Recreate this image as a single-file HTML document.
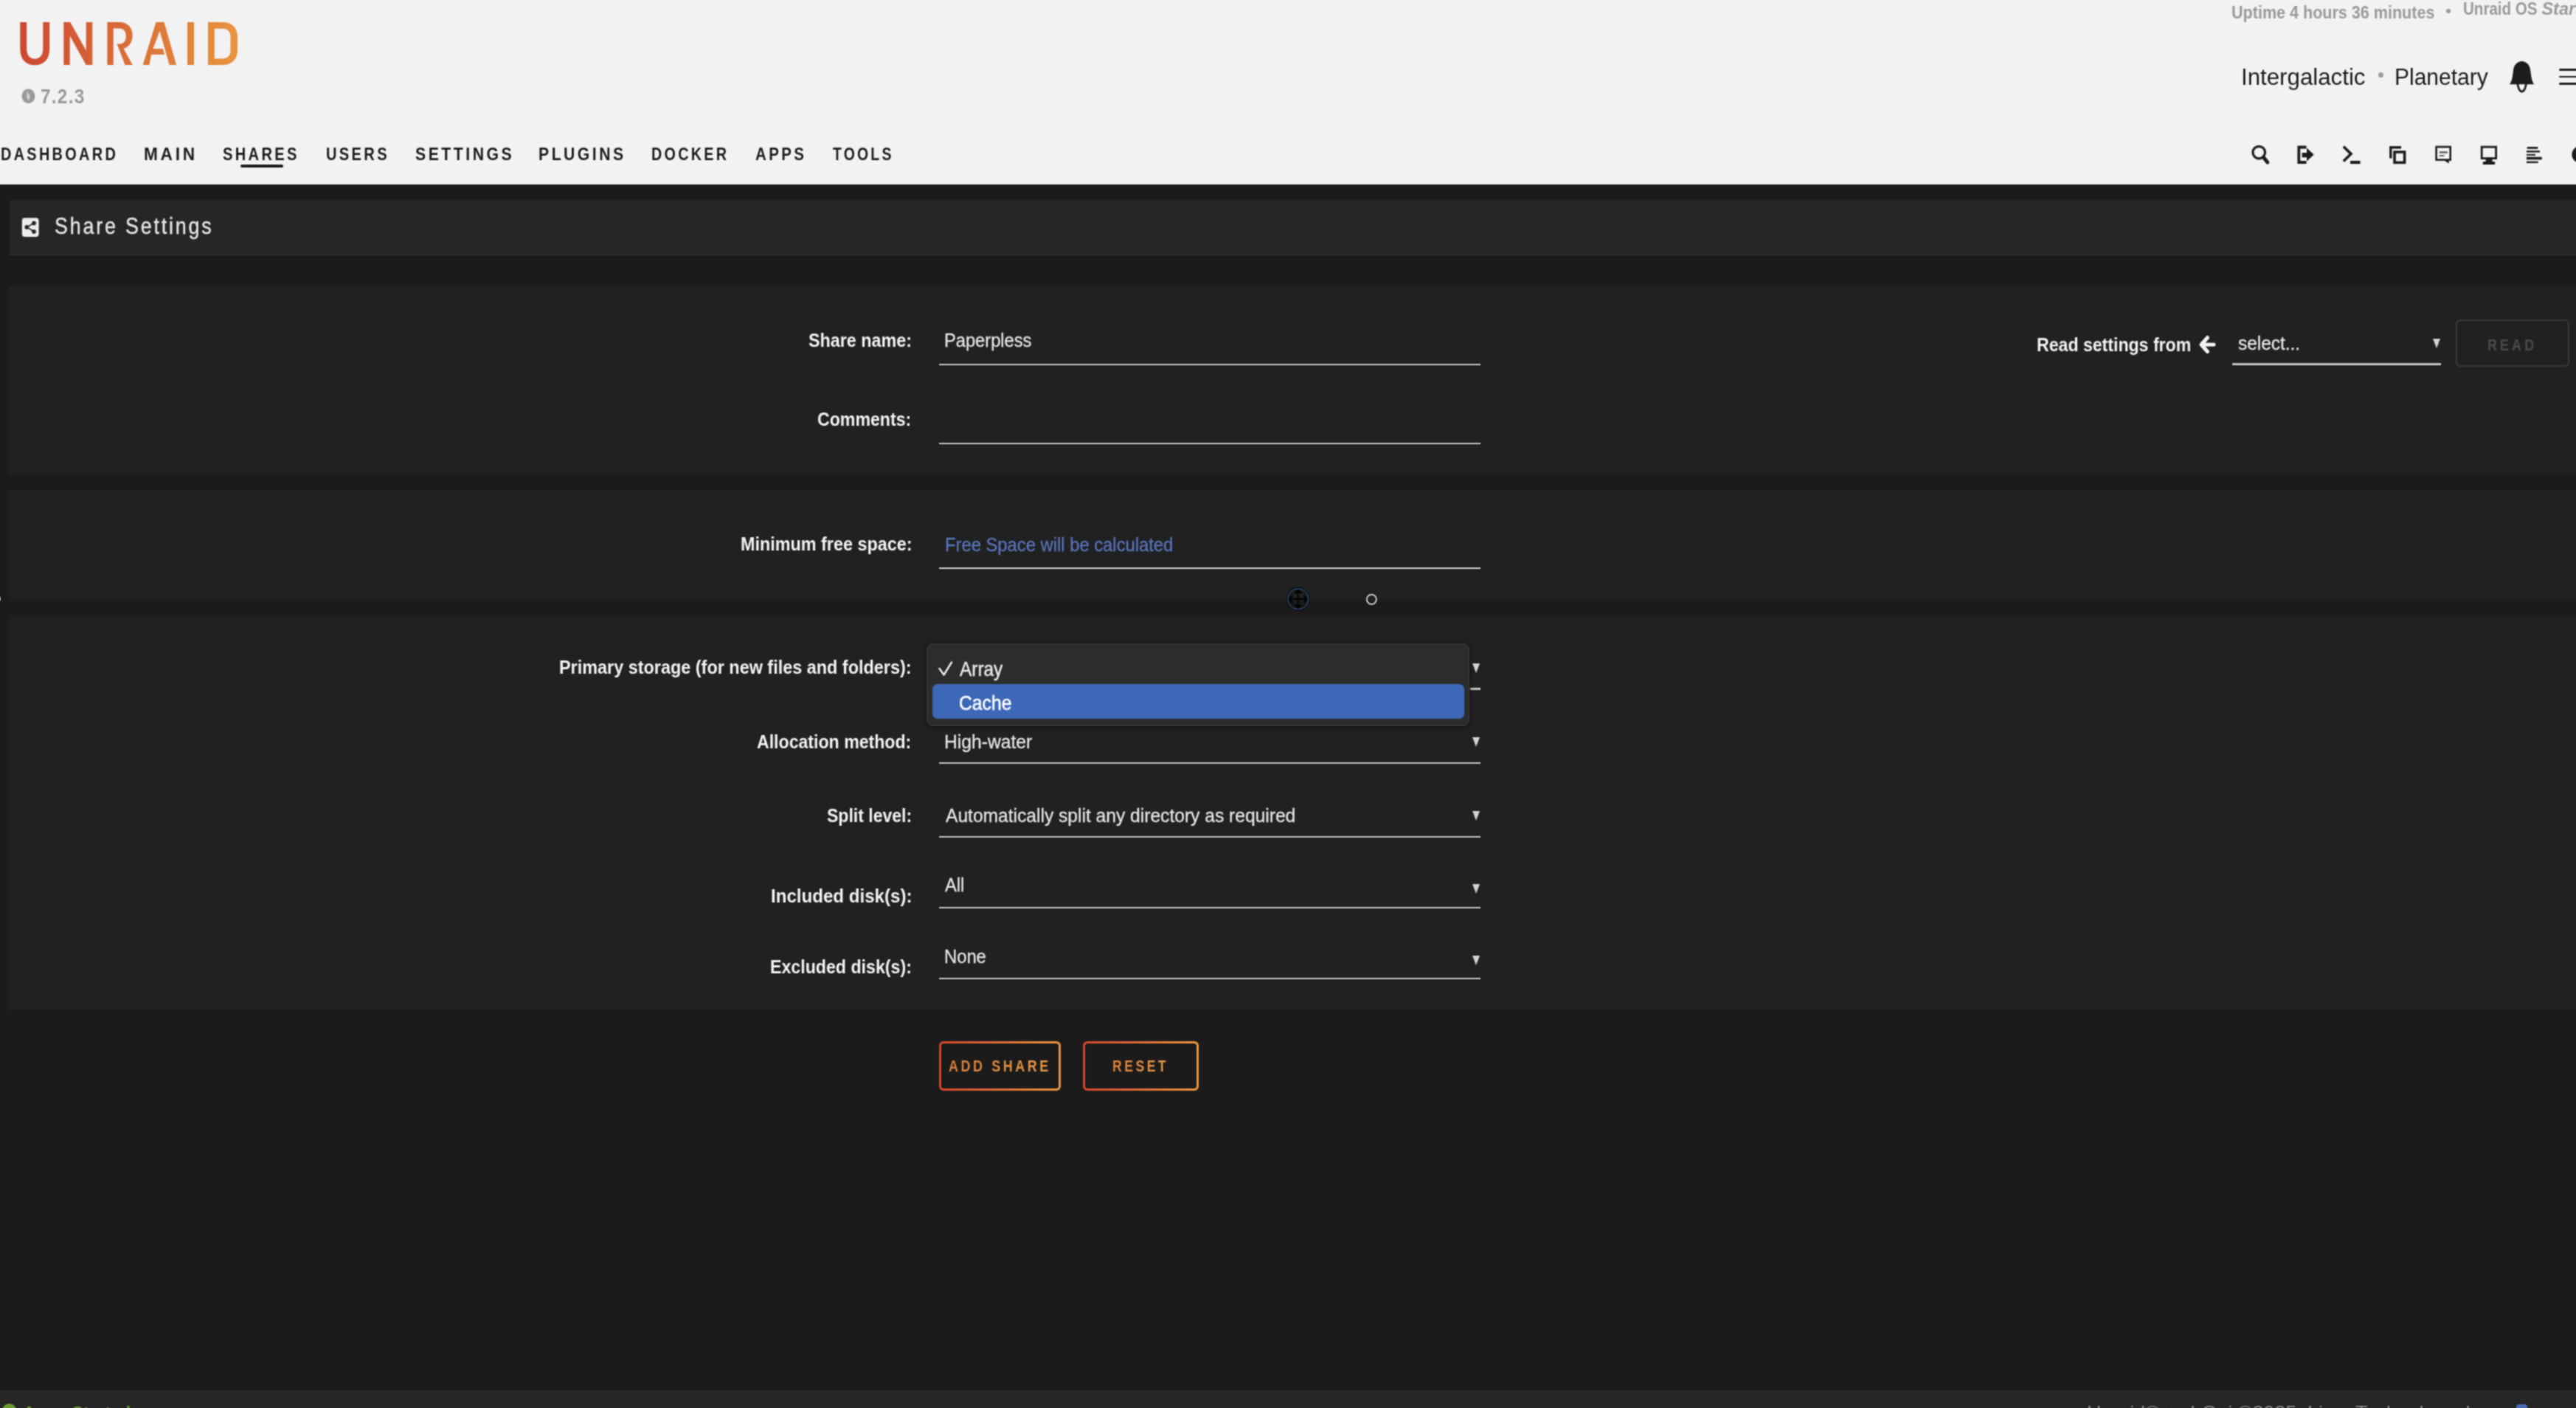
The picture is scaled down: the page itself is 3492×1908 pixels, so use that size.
<!DOCTYPE html>
<html><head><meta charset="utf-8"><title>Share Settings</title>
<style>
html,body{margin:0;padding:0;width:3492px;height:1908px;overflow:hidden;background:#1c1b1b;position:relative;font-family:"Liberation Sans",sans-serif}
.a{position:absolute}
.tx{position:absolute;line-height:1;white-space:pre;transform-origin:0 0;z-index:5}
.ul{position:absolute;height:2.5px;background:#c6c6c6;z-index:2}
.arr{position:absolute;width:0;height:0;border-left:5px solid transparent;border-right:5px solid transparent;border-top:13px solid #d2d2d2;z-index:2}
svg{position:absolute;overflow:visible}
</style></head><body><svg width="0" height="0" style="position:absolute"><filter id="bl" x="0" y="0" width="100%" height="100%" color-interpolation-filters="sRGB"><feConvolveMatrix order="5" kernelMatrix="0.00048 0.00501 0.01095 0.00501 0.00048 0.00501 0.05222 0.11405 0.05222 0.00501 0.01095 0.11405 0.24912 0.11405 0.01095 0.00501 0.05222 0.11405 0.05222 0.00501 0.00048 0.00501 0.01095 0.00501 0.00048" edgeMode="duplicate"/></filter></svg><div style="position:absolute;left:0;top:0;width:3492px;height:1908px;overflow:hidden"><div id="w" style="position:absolute;left:-6px;top:-6px;width:3504px;height:1920px;background:#1c1b1b;filter:url(#bl)"><div style="position:absolute;left:6px;top:6px;width:3492px;height:1908px">
<!-- header -->
<div class="a" style="left:-6px;top:-6px;width:3504px;height:256px;background:#f2f2f2"></div>
<svg style="left:0;top:0" width="340" height="100" viewBox="0 0 340 100">
<defs><linearGradient id="lg" x1="26" y1="0" x2="322" y2="0" gradientUnits="userSpaceOnUse"><stop offset="0" stop-color="#cc4731"/><stop offset="1" stop-color="#e8953f"/></linearGradient></defs>
<g fill="url(#lg)" fill-rule="evenodd">
<path d="M27.3 30H36.2V66C36.2 75 40.5 79.7 47.2 79.7C54 79.7 58.3 75 58.3 66V30H67.2V66C67.2 80.5 59.5 88.3 47.2 88.3C35 88.3 27.3 80.5 27.3 66Z"/>
<path d="M86.3 88V30H95.2L116.7 68.5V30H125.3V88H116.6L94.7 48.5V88Z"/>
<path d="M145.4 30H162C173 30 179.7 37.5 179.7 48C179.7 57 174.5 64 167.5 66L179.7 88H169.5L158.6 59.6H162C167.5 59.6 170.8 55.5 170.8 49C170.8 42.5 167.2 38.5 162 38.5H153.7V88H145.4Z"/>
<path d="M193.6 88L211.5 30H222.5L239.1 88H229.6L216.5 42L207.5 66H221L223 74H205L202.4 88Z"/>
<path d="M254 30H263V88H254Z"/>
<path d="M282 30H301C314.5 30 322 37.5 322 50V68C322 80.5 314.5 88 301 88H282ZM290.8 38.7V79.5H301C308.5 79.5 312.5 75.5 312.5 68V50C312.5 42.5 308.5 38.7 301 38.7Z"/>
</g>
</svg>
<svg style="left:0;top:0" width="60" height="150" viewBox="0 0 60 150">
<ellipse cx="38.5" cy="130.3" rx="9" ry="10" fill="#9a9a9a"/>
<path d="M37 123L41 131L38.5 137L36 131Z" fill="#cfcfcf"/>
</svg>
<div class="a" style="left:326px;top:222.6px;width:58px;height:4px;border-radius:2px;background:#1c1c1c"></div>
<div class="a" style="left:3316px;top:11.5px;width:6px;height:6px;border-radius:50%;background:#9a9a9a"></div>
<div class="a" style="left:3223.8px;top:98.3px;width:7px;height:7px;border-radius:50%;background:#9c9c9c"></div>
<!-- bell -->
<svg style="left:3400px;top:80px" width="40" height="48" viewBox="0 0 40 48">
<path d="M18.6 2.9C12.5 2.9 8.3 8 7.3 13.5L5.8 24C5.3 28.5 3.8 31.5 2 34.3H35.2C33.4 31.5 31.9 28.5 31.4 24L29.9 13.5C28.9 8 24.7 2.9 18.6 2.9Z" fill="#1c1c1c"/>
<path d="M12.8 34C14 40.5 16 44 18.6 44C21.2 44 23.2 40.5 24.4 34" fill="none" stroke="#1c1c1c" stroke-width="2.8"/>
</svg>
<div class="a" style="left:3469.4px;top:93.3px;width:30px;height:2.9px;border-radius:1.5px;background:#1c1c1c"></div>
<div class="a" style="left:3469.4px;top:102.5px;width:30px;height:2.9px;border-radius:1.5px;background:#1c1c1c"></div>
<div class="a" style="left:3469.4px;top:111.8px;width:30px;height:2.9px;border-radius:1.5px;background:#1c1c1c"></div>
<!-- icons row -->
<svg style="left:3040px;top:190px" width="460" height="40" viewBox="3040 190 460 40">
<g fill="none" stroke="#1c1c1c">
<circle cx="3062.2" cy="206.6" r="8.3" stroke-width="3.2"/>
<path d="M3068.3 213L3073.8 220" stroke-width="5" stroke-linecap="round"/>
<path d="M3126.5 199.5H3116.3V220H3126.5" stroke-width="3.8"/>
<path d="M3186.5 197.5L3187.5 208.6L3176.2 219" stroke-width="0"/>
<path d="M3176.8 198.5L3187 208.6L3176.8 218.5" stroke-width="3.6"/>
<path d="M3186 220H3199.5" stroke-width="4.2"/>
<path d="M3240.8 214.5V199.8H3255" stroke-width="3.4"/>
<rect x="3246" y="206" width="13.6" height="14.3" stroke-width="3.6"/>
<rect x="3302.6" y="199" width="19.1" height="17.6" stroke-width="2.6"/>
<rect x="3364.2" y="199.1" width="19.4" height="15.5" stroke-width="2.8"/>
</g>
<g fill="#1c1c1c">
<path d="M3120.6 206.9H3127V200.6L3136.7 209.6L3127 218.6V213.2H3120.6Z"/>
<path d="M3313.5 217.5L3319.5 221.5L3320 217Z"/>
<rect x="3306.9" y="205.3" width="10.9" height="2.3" fill="#555"/>
<rect x="3306.9" y="210" width="6.6" height="2" fill="#666"/>
<rect x="3369.6" y="213.5" width="9" height="6.3"/>
<rect x="3365.7" y="219" width="16.5" height="3.9" rx="1"/>
<rect x="3425.7" y="199" width="14.5" height="2.8"/>
<rect x="3424.9" y="204.1" width="18.1" height="2.4"/>
<rect x="3424.9" y="208.8" width="12.1" height="2"/>
<rect x="3424.9" y="212.7" width="20.8" height="3.6"/>
<rect x="3424.9" y="218.6" width="15.7" height="2.4"/>
<circle cx="3498" cy="209.4" r="11.6"/>
</g>
</svg>

<!-- title bar -->
<div class="a" style="left:13px;top:270.5px;width:3490px;height:73px;background:#262626;border-bottom:2px solid #2e2c2c;border-left:1.5px solid #2a2a2a"></div>
<svg style="left:29px;top:295px" width="24" height="26" viewBox="0 0 24 26">
<rect x="0.8" y="0.3" width="22.8" height="25.6" rx="4" fill="#ececec"/>
<g fill="#262626"><circle cx="17" cy="7.4" r="2.9"/><circle cx="7.3" cy="12.8" r="2.9"/><circle cx="17" cy="18.8" r="2.9"/></g>
<path d="M17 7.4L7.3 12.8L17 18.8" fill="none" stroke="#262626" stroke-width="1.6"/>
</svg>
<!-- panels -->
<div class="a" style="left:12px;top:388px;width:3490px;height:255px;background:#212121"></div>
<div class="a" style="left:12px;top:664px;width:3490px;height:149.5px;background:#212121"></div>
<div class="a" style="left:12px;top:833.5px;width:3490px;height:535.5px;background:#212121"></div>
<!-- underlines -->
<div class="ul" style="left:1272.7px;top:492.8px;width:734.5px"></div>
<div class="ul" style="left:1272.7px;top:599.5px;width:734.5px"></div>
<div class="ul" style="left:1272.7px;top:768.8px;width:734.5px;background:#d4d4d4"></div>
<div class="ul" style="left:1272.7px;top:932.3px;width:734.5px"></div>
<div class="ul" style="left:1272.7px;top:1032.8px;width:734.5px"></div>
<div class="ul" style="left:1272.7px;top:1132.8px;width:734.5px"></div>
<div class="ul" style="left:1272.7px;top:1228.8px;width:734.5px"></div>
<div class="ul" style="left:1272.7px;top:1324.8px;width:734.5px"></div>
<div class="ul" style="left:3026.2px;top:492.3px;width:282.6px"></div>
<!-- select arrows -->
<div class="arr" style="left:1996px;top:899px"></div>
<div class="arr" style="left:1996px;top:999px"></div>
<div class="arr" style="left:1996px;top:1098.5px"></div>
<div class="arr" style="left:1996px;top:1198px"></div>
<div class="arr" style="left:1996px;top:1294.5px"></div>
<div class="arr" style="left:3297.6px;top:459px"></div>
<!-- arrow left icon -->
<svg style="left:2978px;top:452px" width="30" height="30" viewBox="2978 452 30 30">
<path d="M2992.5 457.5L2984 467L2992.5 476.5M2985 467H3001" fill="none" stroke="#f2f2f2" stroke-width="5" stroke-linecap="round" stroke-linejoin="round"/>
</svg>
<!-- READ button -->
<div class="a" style="left:3328.8px;top:433px;width:150.2px;height:59.6px;border:2.5px solid #393939;border-radius:6px"></div>
<!-- popup -->
<div class="a" style="left:1254.8px;top:870.8px;width:738.7px;height:114.2px;box-sizing:border-box;border:1.5px solid #080808;border-radius:10px;background:#2c2c2c;box-shadow:0 2px 6px rgba(0,0,0,.35);z-index:20">
<div class="a" style="left:0;top:0;right:0;bottom:0;border:1.5px solid #4a4a4a;border-radius:8.5px"></div>
<div class="a" style="left:8.7px;top:55.7px;width:720.3px;height:46.3px;border-radius:7px;background:#3d68b8"></div>
</div>
<svg style="left:1270px;top:894px;z-index:21" width="24" height="24" viewBox="1270 894 24 24">
<path d="M1273.5 906L1279.5 914.5L1290 897.5" fill="none" stroke="#e8e8e8" stroke-width="2.6" stroke-linecap="round" stroke-linejoin="round"/>
</svg>
<!-- cursors -->
<svg style="left:1740px;top:792px;z-index:30" width="40" height="40" viewBox="1740 792 40 40">
<circle cx="1759.7" cy="811.7" r="13.8" fill="none" stroke="#000" stroke-width="3.6"/>
<circle cx="1759.7" cy="811.7" r="13.8" fill="none" stroke="#34557c" stroke-width="1.5"/>
<path d="M1759.7 799.9V823.5M1747.9 811.7H1771.5M1755.1 804.3L1759.7 799.9L1764.3 804.3M1755.1 819.1L1759.7 823.5L1764.3 819.1M1752.3 807.1L1747.9 811.7L1752.3 816.3M1767.1 807.1L1771.5 811.7L1767.1 816.3" fill="none" stroke="#000" stroke-width="1.9"/>
</svg>
<svg style="left:1848px;top:801px;z-index:30" width="24" height="24" viewBox="1848 801 24 24">
<circle cx="1859.3" cy="812.3" r="7.6" fill="none" stroke="#000" stroke-width="1" opacity=".6"/>
<circle cx="1859.3" cy="812.3" r="6.6" fill="none" stroke="#dcdcdc" stroke-width="1.8"/>
</svg>
<div class="a" style="left:-8px;top:805.5px;width:10px;height:11px;box-sizing:border-box;border-radius:50%;background:#d8d8d8;border:1px solid #000;z-index:30"></div>
<!-- buttons -->
<div class="a" style="left:1272.8px;top:1411.1px;width:165px;height:66.8px;box-sizing:border-box;border-radius:6px;padding:3px;background:linear-gradient(90deg,#d5452f,#e9963f)"><div style="width:100%;height:100%;background:#1c1b1b;border-radius:3.5px"></div></div>
<div class="a" style="left:1467.9px;top:1411.1px;width:157.1px;height:66.8px;box-sizing:border-box;border-radius:6px;padding:3px;background:linear-gradient(90deg,#d5452f,#e9963f)"><div style="width:100%;height:100%;background:#1c1b1b;border-radius:3.5px"></div></div>
<!-- footer -->
<div class="a" style="left:-6px;top:1883.5px;width:3504px;height:31px;background:#262626"></div>
<div class="a" style="left:2.8px;top:1901.9px;width:19px;height:19px;border-radius:50%;background:#6c9b2f"></div>
<div class="a" style="left:3410.5px;top:1903px;width:15px;height:15px;border-radius:4px;background:#4a6ab8"></div>
<div class="tx" style="left:54.53px;top:117.49px;font-size:28px;font-weight:bold;font-style:normal;letter-spacing:1.5px;color:#9a9a9a;transform:scaleX(0.8672);">7.2.3</div>
<div class="tx" style="left:0.74px;top:196.68px;font-size:24px;font-weight:bold;font-style:normal;letter-spacing:4px;color:#1c1c1c;transform:scaleX(0.8286);">DASHBOARD</div>
<div class="tx" style="left:194.61px;top:196.68px;font-size:24px;font-weight:bold;font-style:normal;letter-spacing:4px;color:#1c1c1c;transform:scaleX(0.9429);">MAIN</div>
<div class="tx" style="left:302.46px;top:196.68px;font-size:24px;font-weight:bold;font-style:normal;letter-spacing:4px;color:#1c1c1c;transform:scaleX(0.8364);">SHARES</div>
<div class="tx" style="left:441.96px;top:196.68px;font-size:24px;font-weight:bold;font-style:normal;letter-spacing:4px;color:#1c1c1c;transform:scaleX(0.8371);">USERS</div>
<div class="tx" style="left:562.92px;top:196.68px;font-size:24px;font-weight:bold;font-style:normal;letter-spacing:4px;color:#1c1c1c;transform:scaleX(0.8822);">SETTINGS</div>
<div class="tx" style="left:730.44px;top:196.68px;font-size:24px;font-weight:bold;font-style:normal;letter-spacing:4px;color:#1c1c1c;transform:scaleX(0.8812);">PLUGINS</div>
<div class="tx" style="left:882.86px;top:196.68px;font-size:24px;font-weight:bold;font-style:normal;letter-spacing:4px;color:#1c1c1c;transform:scaleX(0.8221);">DOCKER</div>
<div class="tx" style="left:1023.55px;top:196.68px;font-size:24px;font-weight:bold;font-style:normal;letter-spacing:4px;color:#1c1c1c;transform:scaleX(0.8513);">APPS</div>
<div class="tx" style="left:1128.70px;top:196.68px;font-size:24px;font-weight:bold;font-style:normal;letter-spacing:4px;color:#1c1c1c;transform:scaleX(0.8082);">TOOLS</div>
<div class="tx" style="left:3024.50px;top:4.58px;font-size:24px;font-weight:bold;font-style:normal;letter-spacing:0px;color:#9a9a9a;transform:scaleX(0.8977);">Uptime 4 hours 36 minutes</div>
<div class="tx" style="left:3338.93px;top:0.80px;font-size:23.5px;font-weight:bold;font-style:normal;letter-spacing:0px;color:#9a9a9a;transform:scaleX(0.8743);">Unraid OS</div>
<div class="tx" style="left:3445.40px;top:0.80px;font-size:23.5px;font-weight:bold;font-style:normal;letter-spacing:0px;color:#9a9a9a;transform:scaleX(1.0000);"><i>Start</i></div>
<div class="tx" style="left:3037.87px;top:87.51px;font-size:32px;font-weight:normal;font-style:normal;letter-spacing:0px;color:#1c1c1c;transform:scaleX(0.9763);">Intergalactic</div>
<div class="tx" style="left:3245.99px;top:87.51px;font-size:32px;font-weight:normal;font-style:normal;letter-spacing:0px;color:#1c1c1c;transform:scaleX(0.9371);">Planetary</div>
<div class="tx" style="left:74.24px;top:291.38px;font-size:30.5px;font-weight:normal;font-style:normal;letter-spacing:3.2px;color:#e4e4e4;transform:scaleX(0.8799);-webkit-text-stroke:0.45px #e4e4e4;">Share Settings</div>
<div class="tx" style="left:1095.62px;top:447.86px;font-size:26.5px;font-weight:bold;font-style:normal;letter-spacing:0px;color:#f2f2f2;transform:scaleX(0.8801);">Share name:</div>
<div class="tx" style="left:1108.13px;top:554.76px;font-size:26.5px;font-weight:bold;font-style:normal;letter-spacing:0px;color:#f2f2f2;transform:scaleX(0.8727);">Comments:</div>
<div class="tx" style="left:1003.64px;top:724.26px;font-size:26.5px;font-weight:bold;font-style:normal;letter-spacing:0px;color:#f2f2f2;transform:scaleX(0.8819);">Minimum free space:</div>
<div class="tx" style="left:758.43px;top:891.26px;font-size:26.5px;font-weight:bold;font-style:normal;letter-spacing:0px;color:#f2f2f2;transform:scaleX(0.8836);">Primary storage (for new files and folders):</div>
<div class="tx" style="left:1026.23px;top:991.66px;font-size:26.5px;font-weight:bold;font-style:normal;letter-spacing:0px;color:#f2f2f2;transform:scaleX(0.8722);">Allocation method:</div>
<div class="tx" style="left:1120.93px;top:1091.76px;font-size:26.5px;font-weight:bold;font-style:normal;letter-spacing:0px;color:#f2f2f2;transform:scaleX(0.8682);">Split level:</div>
<div class="tx" style="left:1044.68px;top:1200.66px;font-size:26.5px;font-weight:bold;font-style:normal;letter-spacing:0px;color:#f2f2f2;transform:scaleX(0.9092);">Included disk(s):</div>
<div class="tx" style="left:1044.05px;top:1296.86px;font-size:26.5px;font-weight:bold;font-style:normal;letter-spacing:0px;color:#f2f2f2;transform:scaleX(0.8744);">Excluded disk(s):</div>
<div class="tx" style="left:2761.26px;top:453.56px;font-size:26.5px;font-weight:bold;font-style:normal;letter-spacing:0px;color:#f2f2f2;transform:scaleX(0.8717);">Read settings from</div>
<div class="tx" style="left:1279.51px;top:447.86px;font-size:26.5px;font-weight:normal;font-style:normal;letter-spacing:0px;color:#e6e6e6;transform:scaleX(0.8931);-webkit-text-stroke:0.3px #e6e6e6;">Paperpless</div>
<div class="tx" style="left:1280.61px;top:724.56px;font-size:26.5px;font-weight:normal;font-style:normal;letter-spacing:0px;color:#5874bc;transform:scaleX(0.8974);-webkit-text-stroke:0.3px #5874bc;">Free Space will be calculated</div>
<div class="tx" style="left:1279.84px;top:991.66px;font-size:26.5px;font-weight:normal;font-style:normal;letter-spacing:0px;color:#e6e6e6;transform:scaleX(0.9310);-webkit-text-stroke:0.3px #e6e6e6;">High-water</div>
<div class="tx" style="left:1281.70px;top:1091.76px;font-size:26.5px;font-weight:normal;font-style:normal;letter-spacing:0px;color:#e6e6e6;transform:scaleX(0.9279);-webkit-text-stroke:0.3px #e6e6e6;">Automatically split any directory as required</div>
<div class="tx" style="left:1281.40px;top:1186.26px;font-size:26.5px;font-weight:normal;font-style:normal;letter-spacing:0px;color:#e6e6e6;transform:scaleX(0.8964);-webkit-text-stroke:0.3px #e6e6e6;">All</div>
<div class="tx" style="left:1279.61px;top:1283.26px;font-size:26.5px;font-weight:normal;font-style:normal;letter-spacing:0px;color:#e6e6e6;transform:scaleX(0.8967);-webkit-text-stroke:0.3px #e6e6e6;">None</div>
<div class="tx" style="left:3033.98px;top:452.16px;font-size:26.5px;font-weight:normal;font-style:normal;letter-spacing:0px;color:#e6e6e6;transform:scaleX(0.9216);-webkit-text-stroke:0.3px #e6e6e6;">select...</div>
<div class="tx" style="left:3372.18px;top:456.67px;font-size:22px;font-weight:bold;font-style:normal;letter-spacing:5px;color:#4a4a4a;transform:scaleX(0.8158);">READ</div>
<div class="tx" style="left:1300.50px;top:892.37px;font-size:28.5px;font-weight:normal;font-style:normal;letter-spacing:0px;color:#e8e8e8;transform:scaleX(0.8559);z-index:21;-webkit-text-stroke:0.5px #e8e8e8;">Array</div>
<div class="tx" style="left:1300.13px;top:938.37px;font-size:28.5px;font-weight:normal;font-style:normal;letter-spacing:0px;color:#ffffff;transform:scaleX(0.8662);z-index:21;-webkit-text-stroke:0.5px #fff;">Cache</div>
<div class="tx" style="left:1285.60px;top:1434.35px;font-size:22.5px;font-weight:bold;font-style:normal;letter-spacing:4.5px;color:#e5903e;transform:scaleX(0.7970);background:linear-gradient(90deg,#dc7e3a,#e99a45);-webkit-background-clip:text;background-clip:text;-webkit-text-fill-color:transparent;">ADD SHARE</div>
<div class="tx" style="left:1507.82px;top:1434.35px;font-size:22.5px;font-weight:bold;font-style:normal;letter-spacing:4.5px;color:#e5903e;transform:scaleX(0.7804);background:linear-gradient(90deg,#dc7e3a,#e99a45);-webkit-background-clip:text;background-clip:text;-webkit-text-fill-color:transparent;">RESET</div>
<div class="tx" style="left:31.04px;top:1902.68px;font-size:24px;font-weight:bold;font-style:normal;letter-spacing:0px;color:#6c9b2f;transform:scaleX(0.9600);">Array Started</div>
<div class="tx" style="left:2828.76px;top:1901.88px;font-size:24px;font-weight:normal;font-style:normal;letter-spacing:0px;color:#8a8a8a;transform:scaleX(1.1176);">Unraid&reg; webGui &copy;2025, Lime Technology, Inc.</div>
</div></div></div></body></html>
